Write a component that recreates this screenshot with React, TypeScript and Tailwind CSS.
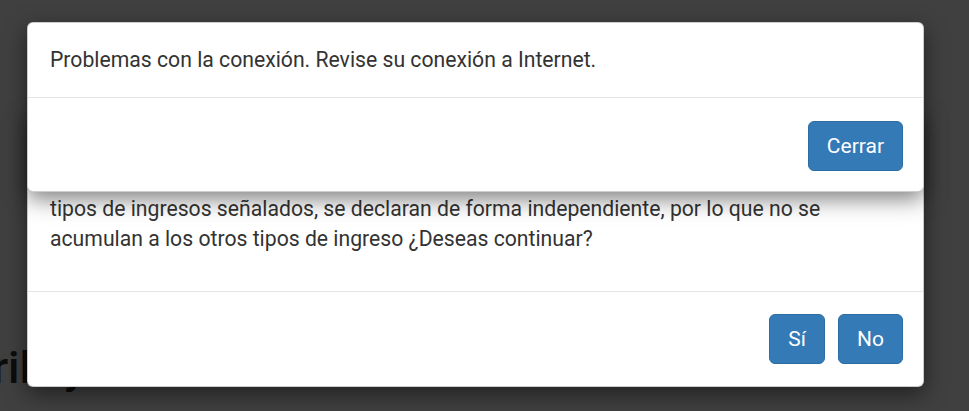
import React from "react";

function Btn({ children }: { children: React.ReactNode }) {
  return (
    <button className="h-[50px] px-[18px] text-[21px] leading-[30px] border border-[#2e6da4] bg-[#337ab7] text-white rounded-[6px]">
      {children}
    </button>
  );
}

export default function App() {
  return (
    <div className="relative w-[969px] h-[411px] overflow-hidden bg-white font-['Roboto',sans-serif] text-[#333]">
      <h2 className="absolute left-[-63px] top-[343px] text-[45px] leading-[50px] font-medium whitespace-nowrap text-[#333]">
        Abril<span className="ml-[33px]">y</span>
      </h2>
      <div className="absolute inset-0 bg-black/75" />

      {/* back modal */}
      <div className="absolute left-[27px] bottom-[24px] w-[897px] bg-white rounded-[6px] border border-black/20 shadow-[0_7px_22px_rgba(0,0,0,0.5)]">
        <div className="p-[22px] text-[21.2px] leading-[30px]">
          <p className="mb-[15px]">
            <span className="block whitespace-nowrap">Los ingresos por arrendamiento, dividendos, ganancias ocasionales y los demás</span>
            <span className="block whitespace-nowrap">ingresos que se reportan en esta sección corresponden a rentas distintas; los</span>
            <span className="block whitespace-nowrap">tipos de ingresos señalados, se declaran de forma independiente, por lo que no se</span>
            <span className="block whitespace-nowrap">acumulan a los otros tipos de ingreso ¿Deseas continuar?</span>
          </p>
        </div>
        <div className="border-t border-[#e5e5e5] pt-[22px] pb-[22px] px-[20px] flex justify-end gap-[13px]">
          <Btn>Sí</Btn>
          <Btn>No</Btn>
        </div>
      </div>

      {/* front modal */}
      <div className="absolute left-[27px] top-[22px] w-[897px] bg-white rounded-[6px] border border-black/20 shadow-[0_7px_22px_rgba(0,0,0,0.5)]">
        <div className="px-[22px] py-[22px] text-[21.2px] leading-[30px] border-b border-[#e5e5e5]">
          Problemas con la conexión. Revise su conexión a Internet.
        </div>
        <div className="pt-[23px] pb-[20px] px-[20px] flex justify-end">
          <Btn>Cerrar</Btn>
        </div>
      </div>
    </div>
  );
}
